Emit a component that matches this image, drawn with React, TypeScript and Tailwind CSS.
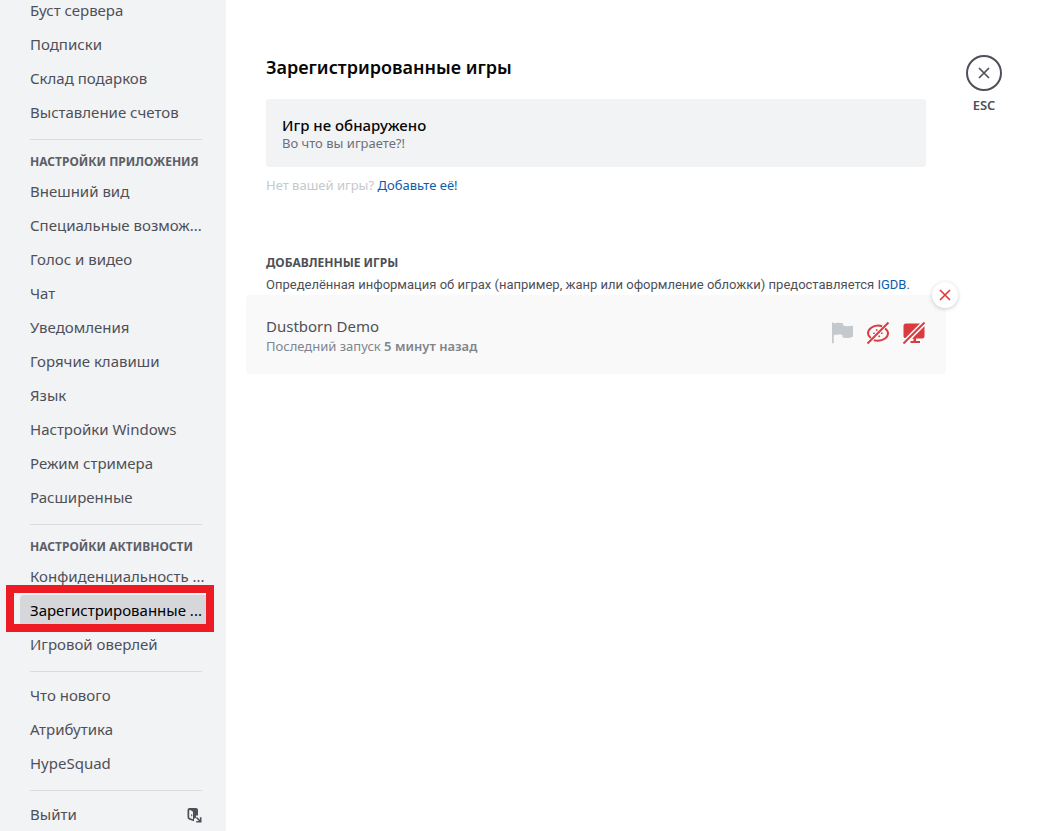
import React from 'react';

interface NavSection {
  title?: string;
  items: string[];
}

const SECTIONS: NavSection[] = [
  {
    items: ['Буст сервера', 'Подписки', 'Склад подарков', 'Выставление счетов'],
  },
  {
    title: 'Настройки приложения',
    items: [
      'Внешний вид',
      'Специальные возмож...',
      'Голос и видео',
      'Чат',
      'Уведомления',
      'Горячие клавиши',
      'Язык',
      'Настройки Windows',
      'Режим стримера',
      'Расширенные',
    ],
  },
  {
    title: 'Настройки активности',
    items: ['Конфиденциальность ...', 'Зарегистрированные ...', 'Игровой оверлей'],
  },
  {
    items: ['Что нового', 'Атрибутика', 'HypeSquad'],
  },
];

const ACTIVE_ITEM = 'Зарегистрированные ...';

const LogoutIcon: React.FC = () => (
  <svg width="16" height="16" viewBox="0 0 16 16" aria-hidden="true">
    <path
      fill="#4e5058"
      fillRule="evenodd"
      d="M3.500 1h6.500A2 2 0 0 1 12 3V8.500H10V11H9L8 12V14.300L3.500 12.800A2.800 2.800 0 0 1 1.500 10V3A2 2 0 0 1 3.500 1ZM3.200 3.500V9.800C3.200 10.500 3.700 11 4.300 11.300L7 12.200V5.500C7 4.800 6.600 4.300 6 4L4.200 3C3.600 2.700 3.200 3 3.200 3.500ZM5.200 7.300h1v2H5.200Z"
    />
    <path d="M10.500 10.500 14.500 14.500M14.700 10.300V14.700H10.300" fill="none" stroke="#4e5058" strokeWidth="1.600" />
  </svg>
);

const CrossIcon: React.FC<{ className: string }> = ({ className }) => (
  <svg className={className} viewBox="0 0 12 12" fill="none" stroke="currentColor" strokeWidth="1.700" aria-hidden="true">
    <path d="M1 1l10 10M11 1L1 11" />
  </svg>
);

const FlagIcon: React.FC = () => (
  <svg width="24" height="24" viewBox="0 0 24 24" aria-hidden="true">
    <path fill="#c4c9ce" d="M2 1.500h1.700V2.500C6 1.500 9.500 1.500 13 2.300V4.500c3 .9 6.500.8 10 .2v11c-3.500 1.500-7.500 1.500-10.500.8v-2.500c-3-.8-6-.6-8.800.2v8H2Z" />
  </svg>
);

const EyeOffIcon: React.FC = () => (
  <svg width="24" height="24" viewBox="0 0 24 24" fill="none" stroke="#d83c3e" aria-hidden="true">
    <path strokeWidth="2" d="M4.800 17C3 15.700 2 14 2 12.300 2 8.300 6.500 4.600 12 4.600c1.500 0 2.900.3 4.100.7M19 7.500c1.900 1.300 3 3 3 4.800 0 4-4.500 7.500-10 7.500-1.500 0-2.900-.2-4.100-.7" />
    <path strokeWidth="1.500" d="M8 13V11.500M10 9.300l1.500-.6M15.800 11.500v1.500M14 15l-1.500.6" />
    <path strokeWidth="2" d="M1.500 22.500 22.500 1.500" />
  </svg>
);

const ScreenOffIcon: React.FC = () => (
  <svg width="24" height="24" viewBox="0 0 24 24" aria-hidden="true">
    <path
      fill="#d83c3e"
      d="M4 2.500h14.500L3.700 17.300C2.500 17.300 1.500 16.300 1.500 15V5A2.500 2.500 0 0 1 4 2.500ZM22.500 5v10a2.500 2.500 0 0 1-2.500 2.500h-6V20h4v2H8.500v-2H11.500v-2.500h-1.500Z"
    />
    <path stroke="#f9f9f9" strokeWidth="5" d="M1.500 22.500 22.500 1.500" />
    <path stroke="#d83c3e" strokeWidth="2" d="M1.500 22.500 22.500 1.500" />
  </svg>
);

const Divider: React.FC = () => <hr className="mx-2.5 my-2 border-[#d9dade]" />;

const NavItem: React.FC<{ label: string; active?: boolean }> = ({ label, active }) => (
  <li className="relative pb-0.5">
    <button
      type="button"
      aria-current={active ? 'page' : undefined}
      className={
        active
          ? 'block h-8 w-full truncate rounded bg-[#d6d7da] pb-0.5 pl-2.5 text-left text-black'
          : 'block h-8 w-full truncate rounded pb-0.5 pl-2.5 text-left text-[#4e5058]'
      }
    >
      {label}
    </button>
    {active && (
      <span className="pointer-events-none absolute -top-2.5 -right-0.5 -bottom-[3px] -left-3.5 border-8 border-[#ed1c24]" />
    )}
  </li>
);

const Sidebar: React.FC = () => (
  <nav className="flex h-screen w-[226px] shrink-0 flex-col justify-end overflow-hidden bg-[#f2f3f5] pr-3.5 pl-5 text-[15px]">
    {SECTIONS.map((section, index) => (
      <section key={index}>
        {section.title && (
          <h2 className="px-2.5 py-1.5 text-xs leading-4 font-bold whitespace-nowrap text-[#5c5e66] uppercase">
            {section.title}
          </h2>
        )}
        <ul>
          {section.items.map((item) => (
            <NavItem key={item} label={item} active={item === ACTIVE_ITEM} />
          ))}
        </ul>
        <Divider />
      </section>
    ))}
    <button type="button" className="flex h-8 shrink-0 items-center justify-between px-2.5 text-[#4e5058]">
      <span className="pb-0.5">Выйти</span>
      <LogoutIcon />
    </button>
  </nav>
);

const GameCard: React.FC = () => (
  <article className="relative -mx-5 flex items-start justify-between rounded bg-[#f9f9f9] px-5 pt-[19px] pb-5">
    <div>
      <h3 className="text-[15px] leading-6 text-[#4e5058]">Dustborn Demo</h3>
      <p className="text-[13px] leading-4 text-[#80848e]">
        Последний запуск <strong className="font-semibold">5 минут назад</strong>
      </p>
    </div>
    <div className="flex gap-3 pt-[7px]">
      <button type="button" aria-label="Пожаловаться">
        <FlagIcon />
      </button>
      <button type="button" aria-label="Показывать игру">
        <EyeOffIcon />
      </button>
      <button type="button" aria-label="Включить оверлей">
        <ScreenOffIcon />
      </button>
    </div>
    <button
      type="button"
      aria-label="Удалить"
      className="absolute -top-[13px] -right-3 flex size-[26px] items-center justify-center rounded-full bg-white text-[#e03b3f] shadow-[0_1px_4px_rgba(0,0,0,0.2)]"
    >
      <CrossIcon className="size-3" />
    </button>
  </article>
);

const App: React.FC = () => (
  <div className="flex h-screen overflow-hidden bg-white font-['Noto_Sans',sans-serif]">
    <Sidebar />
    <main className="max-w-[740px] min-w-0 flex-1 px-10 pt-[55px]">
      <h1 className="text-lg leading-6 font-semibold text-[#060607]">Зарегистрированные игры</h1>
      <div className="mt-5 rounded-[3px] bg-[#f2f3f5] p-4">
        <h2 className="text-[15px] leading-5 font-medium text-[#060607]">Игр не обнаружено</h2>
        <p className="text-[13px] leading-4 text-[#6d6f78]">Во что вы играете?!</p>
      </div>
      <p className="mt-2.5 text-[13px] leading-4 text-[#c4c9ce]">
        Нет вашей игры?{' '}
        <a href="#add" className="text-[#0b5cad]">
          Добавьте её!
        </a>
      </p>
      <h2 className="mt-[62px] text-xs leading-4 font-bold text-[#4e5058] uppercase">Добавленные игры</h2>
      <p className="mt-1.5 mb-0.5 font-[Roboto,sans-serif] text-[13px] leading-4 whitespace-nowrap text-[#4e5058]">
        Определённая информация об играх (например, жанр или оформление обложки) предоставляется{' '}
        <a href="#igdb" className="text-[#0b5cad]">
          IGDB
        </a>
        .
      </p>
      <GameCard />
    </main>
    <div className="flex flex-col items-center self-start pt-[55px] text-[#4e5058]">
      <button
        type="button"
        aria-label="Закрыть"
        className="flex size-9 items-center justify-center rounded-full border-2 border-[#4e5058]"
      >
        <CrossIcon className="size-3" />
      </button>
      <span className="mt-1.5 text-[13px] leading-4 font-semibold">ESC</span>
    </div>
  </div>
);

export default App;
